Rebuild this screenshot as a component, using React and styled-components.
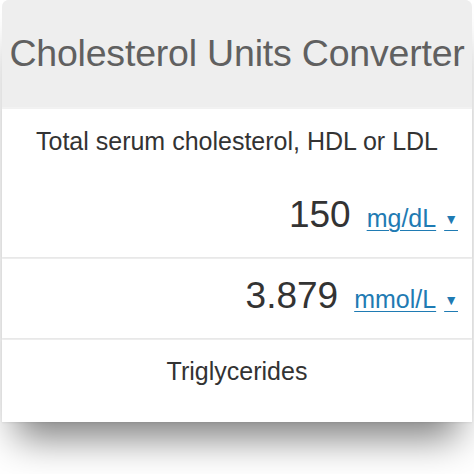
import React from "react";
import styled, { createGlobalStyle } from "styled-components";

const Global = createGlobalStyle`
  html, body {
    margin: 0;
    padding: 0;
    background: #ffffff;
  }
  body {
    font-family: "Liberation Sans", Arial, sans-serif;
  }
`;

const Page = styled.div`
  padding-bottom: 60px;
`;

const Panel = styled.div`
  margin: 0 2px;
  width: 470px;
  display: flex;
  flex-direction: column;
  gap: 2px;
  background: #f2f2f2;
  border-radius: 7px 7px 0 0;
  box-shadow: 0 30px 36px -14px rgba(0, 0, 0, 0.5);
`;

const Header = styled.h1`
  margin: 0;
  height: 107px;
  display: flex;
  align-items: center;
  justify-content: center;
  background: #eeeeee;
  border-radius: 7px 7px 0 0;
  color: #606060;
  font-weight: 400;
  font-size: 37.5px;
  letter-spacing: -0.2px;
`;

const Card = styled.section`
  background: #ffffff;
  height: ${(p) => p.h}px;
  display: flex;
  flex-direction: column;
  padding: 0 14px;
  box-sizing: border-box;
  box-shadow: 0 1px 2px rgba(0, 0, 0, 0.06);
`;

const Label = styled.div`
  text-align: center;
  color: #333333;
  font-size: 25px;
  padding-top: ${(p) => p.top}px;
`;

const ValueRow = styled.div`
  display: flex;
  justify-content: flex-end;
  align-items: baseline;
  gap: 16px;
  margin-top: ${(p) => p.top}px;
`;

const Value = styled.span`
  font-size: 37px;
  color: #333333;
`;

const Unit = styled.a`
  font-size: 25px;
  color: #1f7bb3;
  text-decoration: underline;
  text-underline-offset: 3px;
  text-decoration-thickness: 1px;
  cursor: pointer;
`;

const Caret = styled.span`
  font-size: 14px;
  margin-left: 8px;
  vertical-align: 3px;
`;

function UnitSelect({ unit }) {
  return (
    <Unit>
      {unit}
      <Caret>▼</Caret>
    </Unit>
  );
}

export default function App() {
  return (
    <Page>
      <Global />
      <Panel>
        <Header>Cholesterol Units Converter</Header>
        <Card h={148}>
          <Label top={18}>Total serum cholesterol, HDL or LDL</Label>
          <ValueRow top={38}>
            <Value>150</Value>
            <UnitSelect unit="mg/dL" />
          </ValueRow>
        </Card>
        <Card h={79}>
          <ValueRow top={16}>
            <Value>3.879</Value>
            <UnitSelect unit="mmol/L" />
          </ValueRow>
        </Card>
        <Card h={82}>
          <Label top={17}>Triglycerides</Label>
        </Card>
      </Panel>
    </Page>
  );
}
